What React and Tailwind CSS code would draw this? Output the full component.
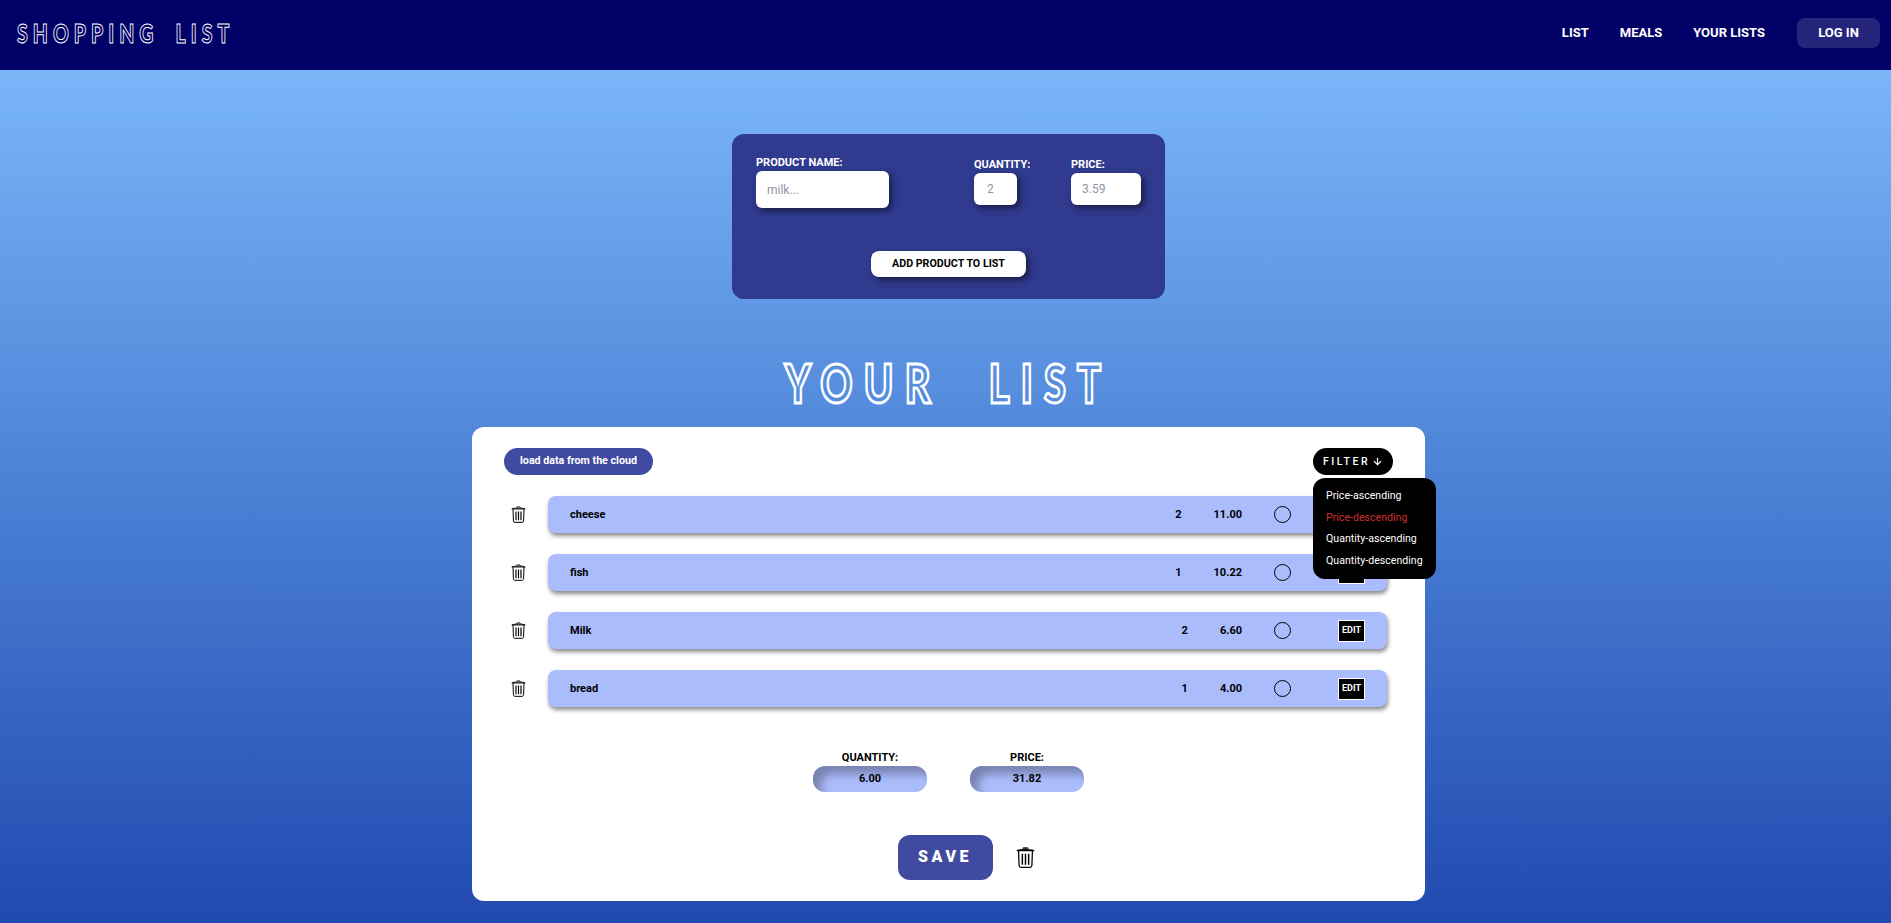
import React from 'react';
import { ArrowDown } from 'lucide-react';

const products = [
    { name: 'cheese', quantity: 2, price: '11.00' },
    { name: 'fish', quantity: 1, price: '10.22' },
    { name: 'Milk', quantity: 2, price: '6.60' },
    { name: 'bread', quantity: 1, price: '4.00' },
];

const TrashIcon = ({ className }) => (
    <svg viewBox="0 0 18 20" className={className} fill="none" stroke="currentColor">
        <path d="M6.5 1.6 C6.5 0.6 11.5 0.6 11.5 1.6" strokeWidth="1.2" />
        <path d="M1 3.4 C1 2 17 2 17 3.4 Z" strokeWidth="1.1" strokeLinejoin="round" />
        <path d="M2.4 3.6 L2.9 17.6 C3 18.8 3.8 19.4 4.8 19.4 L13.2 19.4 C14.2 19.4 15 18.8 15.1 17.6 L15.6 3.6" strokeWidth="1.2" />
        <path d="M6 6.5 V17 M9 6.5 V17 M12 6.5 V17" strokeWidth="1.4" />
    </svg>
);

const Field = ({ label, placeholder, className, inputClass }) => (
    <div className={`flex flex-col ${className}`}>
        <label className="text-[11px] leading-[13px] mb-[2px] font-bold text-white whitespace-nowrap">{label}</label>
        <input
            placeholder={placeholder}
            readOnly
            className={`bg-white rounded-md text-xs text-black placeholder:text-[#8f95a3] outline-none shadow-[3px_3px_6px_rgba(0,0,0,0.5)] ${inputClass}`}
        />
    </div>
);

const Row = ({ product }) => (
    <div className="flex items-center">
        <TrashIcon className="w-[15px] h-[17px] text-black ml-[7px] mr-[22px] shrink-0" />
        <div className="flex-1 h-[37px] bg-[#abbcfd] rounded-lg shadow-[1px_3px_4px_rgba(0,0,0,0.45)] flex items-center pl-[22px] pr-[22px] text-[11px] font-bold text-black">
            <span className="flex-1 pt-px">{product.name}</span>
            <span className="pt-px">{product.quantity}</span>
            <span className="ml-[32px] pt-px">{product.price}</span>
            <span className="ml-[32px] w-[17px] h-[17px] rounded-full border border-black" />
            <span className="ml-[47px] w-[27px] h-[22px] bg-black border border-white text-white text-[9px] flex items-center justify-center">EDIT</span>
        </div>
    </div>
);

const Total = ({ label, value }) => (
    <div className="flex flex-col items-center w-[114px]">
        <span className="text-[11px] leading-[13px] font-bold text-black">{label}</span>
        <div className="w-full h-[26px] mt-[2px] rounded-xl bg-[#abbcfd] shadow-[inset_8px_8px_8px_rgba(0,0,0,0.3)] flex items-center justify-center text-[11px] font-bold text-black">
            {value}
        </div>
    </div>
);

const App = () => {
    return (
        <div className="h-[923px] overflow-hidden font-['Roboto',sans-serif]">
            <header className="h-[70px] bg-[#000066] flex items-center justify-between pl-[17px] pr-[11px] pb-[4px]">
                <span className="origin-left scale-x-[0.75] font-['Lato',sans-serif] font-black text-[26px] tracking-[6.7px] [word-spacing:10px] text-transparent [-webkit-text-stroke:1px_white]">SHOPPING LIST</span>
                <nav className="flex items-center text-white text-[13px] font-bold">
                    <a className="mr-[31px]">LIST</a>
                    <a className="mr-[31px]">MEALS</a>
                    <a className="mr-[32px]">YOUR LISTS</a>
                    <button className="w-[83px] h-[30px] rounded-lg bg-[#24247a] text-white text-[13px] font-bold">LOG IN</button>
                </nav>
            </header>

            <div className="h-[853px] pl-[6px] pt-[64px] bg-gradient-to-b from-[#7ab6f8] to-[#2249b0]">
                <section className="w-[433px] mx-auto pt-[22px] h-[165px] bg-[#303a8e] rounded-xl px-6">
                    <div className="flex items-center">
                        <Field label="PRODUCT NAME:" placeholder="milk..." className="w-[133px] mr-[85px]" inputClass="w-[133px] h-[37px] px-[11px]" />
                        <Field label="QUANTITY:" placeholder="2" className="w-[54px] mr-[43px] mb-[2px]" inputClass="w-[43px] h-[32px] px-[13px]" />
                        <Field label="PRICE:" placeholder="3.59" className="w-[70px] mb-[2px]" inputClass="w-[70px] h-[32px] px-[11px]" />
                    </div>
                    <div className="flex justify-center mt-[43px]">
                        <button className="w-[155px] h-[26px] bg-white rounded-lg text-[10.7px] font-bold text-black shadow-[3px_3px_6px_rgba(0,0,0,0.5)]">ADD PRODUCT TO LIST</button>
                    </div>
                </section>

                <h1 className="pt-[40px] h-[128px] flex items-center justify-center">
                    <span className="scale-x-[0.75] font-['Lato',sans-serif] font-black text-[53px] tracking-[15px] [word-spacing:35px] text-transparent [-webkit-text-stroke:3px_white]">YOUR LIST</span>
                </h1>

                <main className="relative w-[953px] h-[474px] mx-auto bg-white rounded-xl pt-[21px] pl-[32px] pr-[38px]">
                    <div className="flex items-center justify-between -mr-[6px]">
                        <button className="w-[149px] h-[27px] rounded-full bg-[#3f4aa0] text-white text-[10.7px] font-bold">load data from the cloud</button>
                        <button className="w-[80px] h-[27px] rounded-full bg-black text-white text-[10.5px] font-medium tracking-[2.5px] flex items-center justify-center">
                            FILTER
                            <ArrowDown className="w-[11px] h-[11px] ml-[2px]" strokeWidth={2.5} />
                        </button>
                    </div>

                    <div className="absolute top-[51px] right-[-11px] w-[123px] h-[101px] bg-black rounded-xl text-white text-[10.6px] pt-[7px] pl-[13px] leading-[21.5px] z-10">
                        <div>Price-ascending</div>
                        <div className="text-[#d32f2f]">Price-descending</div>
                        <div>Quantity-ascending</div>
                        <div>Quantity-descending</div>
                    </div>

                    <div className="flex flex-col gap-[21px] mt-[21px]">
                        {products.map(product => (
                            <Row product={product} key={product.name} />
                        ))}
                    </div>

                    <div className="flex justify-center gap-[43px] mt-[44px] ml-[6px]">
                        <Total label="QUANTITY:" value="6.00" />
                        <Total label="PRICE:" value="31.82" />
                    </div>

                    <div className="flex items-center justify-center mt-[43px] ml-[41px]">
                        <button className="w-[95px] h-[45px] rounded-xl bg-[#3f4aa0] text-white text-base font-black tracking-[3.5px] pb-px">SAVE</button>
                        <TrashIcon className="w-[19px] h-[21px] text-black ml-[23px]" />
                    </div>
                </main>
            </div>
        </div>
    );
};

export default App;
